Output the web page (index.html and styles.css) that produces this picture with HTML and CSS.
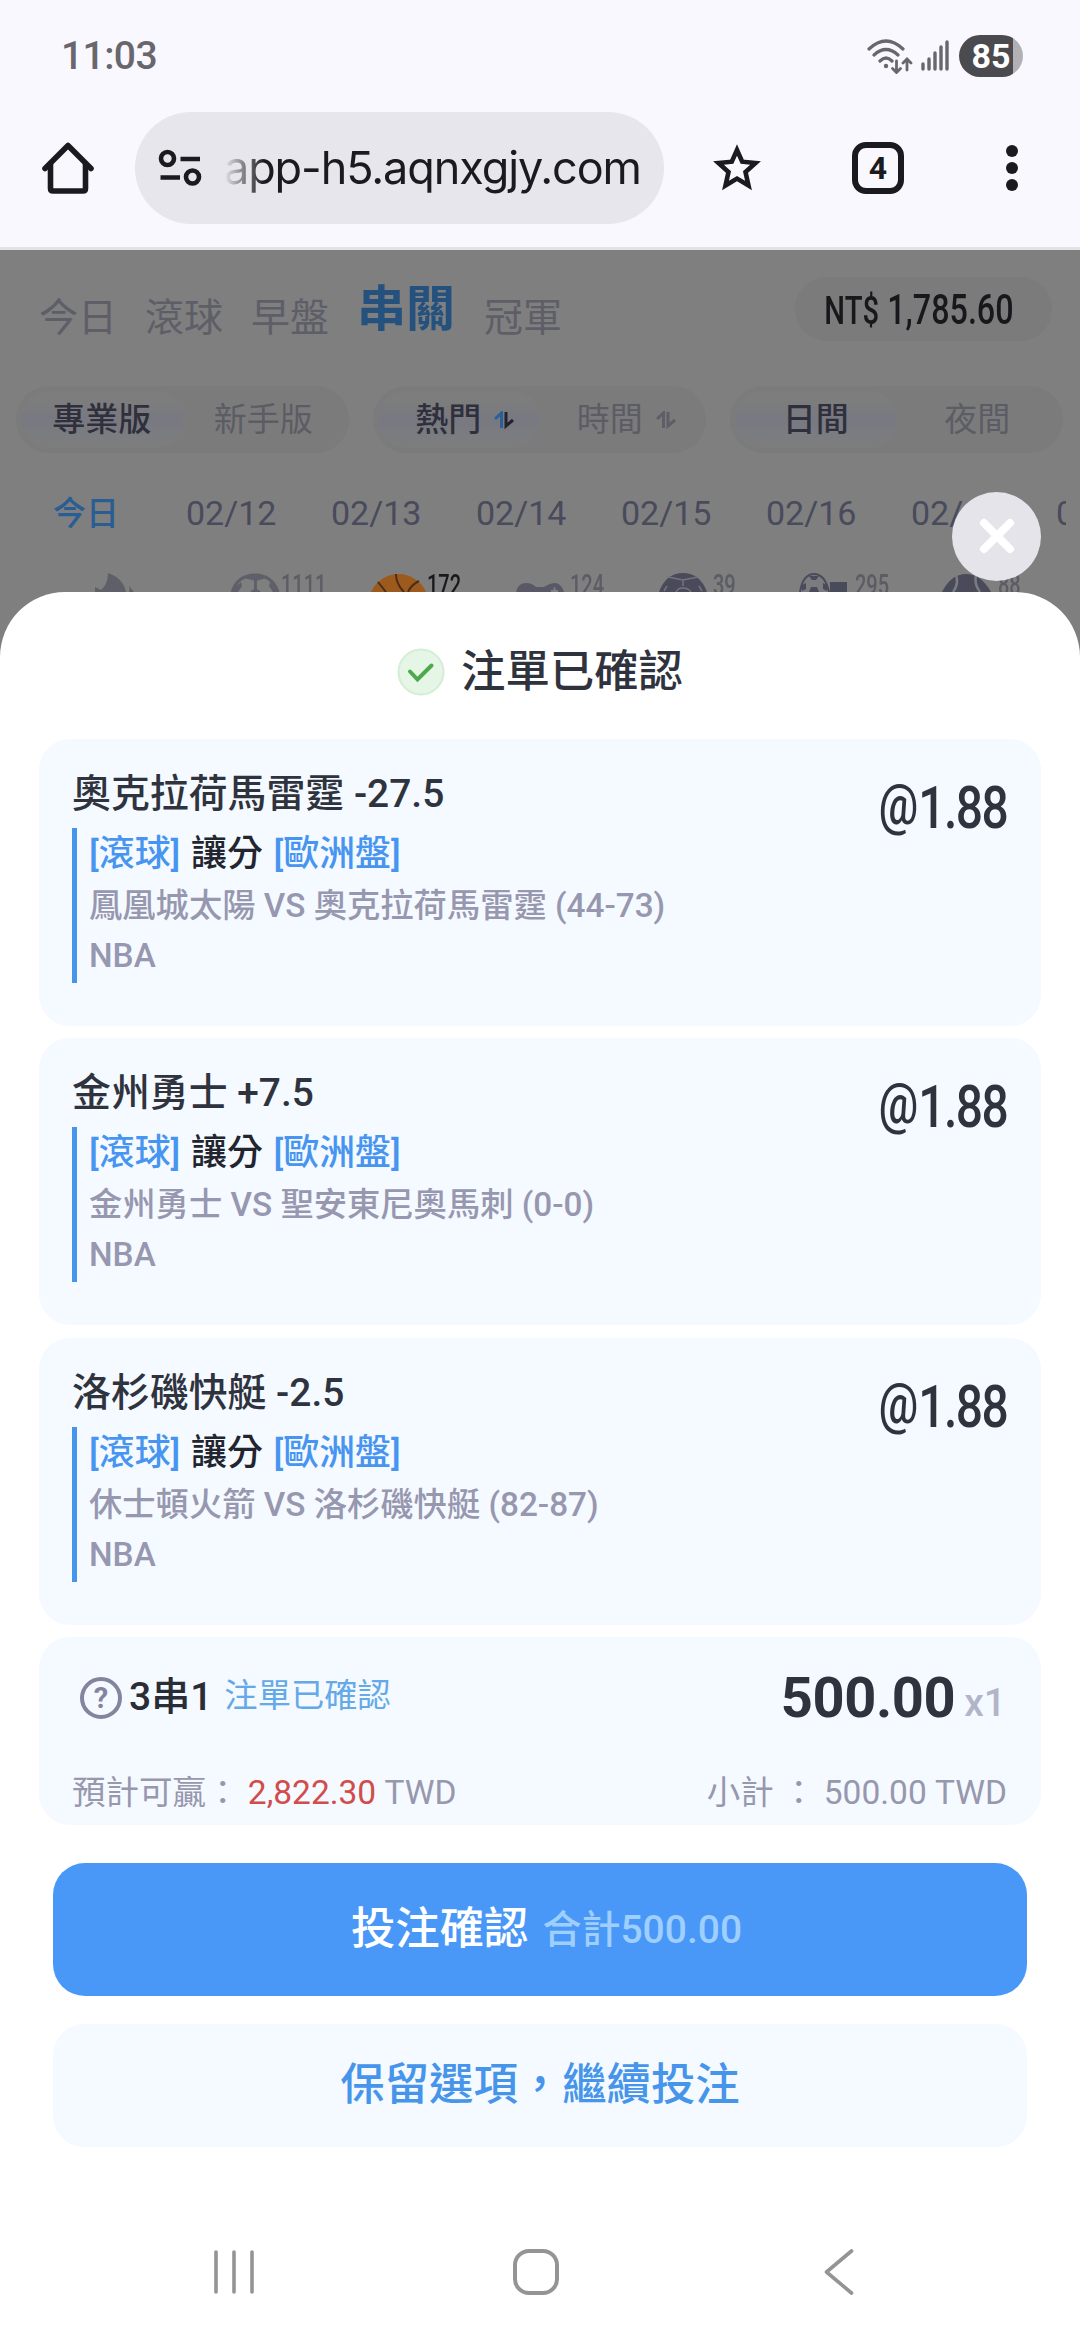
FILE: index.html
```html
<!DOCTYPE html>
<html lang="zh-Hant">
<head>
<meta charset="utf-8">
<title>注單已確認</title>
<link rel="stylesheet" href="styles.css">
</head>
<body>
<div class="screen">
  <header class="browser">
    <div class="status">
      <span class="clock">11:03</span>
      <div class="status-icons">
        <svg class="wifi" width="46" height="36" viewBox="0 0 46 36" fill="none" stroke="#68676d" stroke-width="3.2" stroke-linecap="round"><path d="M2 11Q19 -5 36 11M7 17Q19 6 31 17M13 23Q19 17 25 23"/><circle cx="19" cy="28" r="2.2" fill="#68676d" stroke="none"/><path d="M29.500 23v11M25.500 30.500l4 4l4-4M40 32V21.500M36 25l4-4l4 4" stroke-width="2.800"/></svg>
        <svg class="signal" width="28" height="32" viewBox="0 0 28 32" stroke="#68676d" stroke-width="3.4" stroke-linecap="round"><path d="M2 29v-5M8 29V19M14 29V13M20 29V7M26 29V2"/></svg>
        <span class="battery">85</span>
      </div>
    </div>
    <div class="toolbar">
      <svg class="home" width="54" height="54" viewBox="0 0 54 54" fill="none" stroke="#1b1b1f" stroke-width="5.600" stroke-linejoin="round" stroke-linecap="round"><path d="M4 27.500L27 4.500L50 27.500"/><path d="M9.500 23V47.500Q9.500 50 12 50H42Q44.500 50 44.500 47.500V23"/></svg>
      <div class="address">
        <svg class="tune" width="44" height="38" viewBox="0 0 44 38" fill="none" stroke="#1b1b1f" stroke-width="4.600"><circle cx="9.500" cy="9.500" r="6.500"/><path d="M22.500 10H42M2.500 28.500H22"/><circle cx="34.500" cy="28" r="6.500"/></svg>
        <span class="url">app-h5.aqnxgjy.com</span>
      </div>
      <svg class="star" width="50" height="50" viewBox="0 0 50 50" fill="none" stroke="#1b1b1f" stroke-width="4.600"><path d="M25 7L30.200 18.700L43.500 20L33.500 29L36.500 42.500L25 35.600L13.500 42.500L16.500 29L6.500 20L19.800 18.700Z"/></svg>
      <div class="tab-count">4</div>
      <svg class="dots" width="14" height="50" viewBox="0 0 14 50" fill="#1b1b1f"><circle cx="7" cy="8" r="6"/><circle cx="7" cy="25" r="6"/><circle cx="7" cy="42" r="6"/></svg>
    </div>
  </header>

  <section class="site">
    <div class="top-row">
      <nav class="tabs"><span>今日</span><span>滾球</span><span>早盤</span><span class="current">串關</span><span>冠軍</span></nav>
      <div class="balance"><span class="narrow"><small>NT$</small> 1,785.60</span></div>
    </div>
    <div class="segments">
      <div class="segment"><span class="on">專業版</span><span>新手版</span></div>
      <div class="segment sorts"><span class="on">熱門<svg class="sort" width="20" height="18" viewBox="0 0 20 18" fill="none" stroke-width="3"><path d="M1 8L7.500 2V17" stroke="#2a5f98"/><path d="M12 1V15L19 9" stroke="#22232e"/></svg></span><span>時間<svg class="sort" width="20" height="18" viewBox="0 0 20 18" fill="none" stroke="#5e5e68" stroke-width="3"><path d="M1 8L7.500 2V17M12 1V15L19 9"/></svg></span></div>
      <div class="segment"><span class="on">日間</span><span>夜間</span></div>
    </div>
    <div class="dates"><span class="today">今日</span><span>02/12</span><span>02/13</span><span>02/14</span><span>02/15</span><span>02/16</span><span>02/17</span><span>02/18</span></div>
    <div class="sports">
      <div class="sport"><svg width="60" height="20" viewBox="0 0 60 20" fill="#5f5f6a"><path d="M14 20V15L20 18Q27 12 27 1Q42 6 45 20ZM48 20Q49 16 48 14L53 20Z"/></svg></div>
      <div class="sport"><svg width="60" height="20" viewBox="0 0 60 20"><path d="M8 20Q14 3 31 3T54 20" fill="none" stroke="#5f5f6a" stroke-width="3"/><path d="M20 6Q31 0 42 6L32 9ZM30 8h3v9l4 3H26l4-3ZM10 16L17 10L18 14L14 20H8ZM53 16L46 10L45 14L49 20H55Z" fill="#5f5f6a"/></svg><span>1111</span></div>
      <div class="sport active"><svg width="60" height="20" viewBox="0 0 60 20"><path d="M1 20A30 30 0 0 1 56 20Z" fill="#9c5b1c"/><path d="M26 2Q26 12 34 20M8 10L16 20M49 9Q41 13 38 20" fill="none" stroke="#4a2d17" stroke-width="2"/></svg><span>172</span></div>
      <div class="sport"><svg width="60" height="20" viewBox="0 0 60 20" fill="#585866"><path d="M3 20Q5 11 13 11Q19 11 23 15H31Q37 11 43 11Q49 13 51 20Z"/><path d="M38 19h7M41.500 15.500v5" stroke="#7f7f7f" stroke-width="2"/></svg><span>124</span></div>
      <div class="sport"><svg width="60" height="20" viewBox="0 0 60 20"><path d="M3 20Q10 1 27 1T51 20Z" fill="#4a4b5a"/><path d="M12 5L27 8L42 5M27 8V14M8 19L11 14M46 19L43 14M20 20Q22 16 27 16T35 20" fill="none" stroke="#74747c" stroke-width="1.500"/></svg><span>39</span></div>
      <div class="sport"><svg width="60" height="20" viewBox="0 0 60 20"><path d="M2 20Q5 2 16 2T31 20" fill="#7b7b80" stroke="#4a4b5a" stroke-width="2"/><path d="M11 4H21L18 8H14ZM11 20L13 15H19L21 20ZM4 13L8 11V17L4 19ZM29 13L25 11V17L29 19ZM32 10H49V20H32Z" fill="#4a4b5a"/></svg><span>295</span></div>
      <div class="sport"><svg width="60" height="20" viewBox="0 0 60 20"><path d="M1 20Q10 2 25 2T50 20Z" fill="#4a4b5a"/><path d="M15 3Q18 12 12 20M35 3Q33 12 39 20" fill="none" stroke="#7b7b80" stroke-width="2.500"/></svg><span>88</span></div>
    </div>
  </section>

  <main class="sheet">
    <button class="close" aria-label="關閉"><svg width="36" height="36" viewBox="0 0 36 36" stroke="#fff" stroke-width="8" stroke-linecap="round"><path d="M5 5L31 31M31 5L5 31"/></svg></button>
    <h1 class="sheet-title"><svg width="48" height="48" viewBox="0 0 48 48" fill="none"><circle cx="24" cy="24" r="22.500" fill="#e5f6e7" stroke="#d3edd6" stroke-width="2"/><path d="M13 23.500L20.500 31.500L34.500 17.500" stroke="#4ea94b" stroke-width="4" stroke-linecap="round"/></svg>注單已確認</h1>

    <div class="bets">
      <article class="bet">
        <div class="bet-info">
          <h2>奧克拉荷馬雷霆 -27.5</h2>
          <div class="detail"><p class="market"><b>[滾球]</b> 讓分 <b>[歐洲盤]</b></p><p>鳳凰城太陽 VS 奧克拉荷馬雷霆 (44-73)</p><p>NBA</p></div>
        </div>
        <div class="odds"><u>@</u><i>1.88</i></div>
      </article>
      <article class="bet">
        <div class="bet-info">
          <h2>金州勇士 +7.5</h2>
          <div class="detail"><p class="market"><b>[滾球]</b> 讓分 <b>[歐洲盤]</b></p><p>金州勇士 VS 聖安東尼奧馬刺 (0-0)</p><p>NBA</p></div>
        </div>
        <div class="odds"><u>@</u><i>1.88</i></div>
      </article>
      <article class="bet">
        <div class="bet-info">
          <h2>洛杉磯快艇 -2.5</h2>
          <div class="detail"><p class="market"><b>[滾球]</b> 讓分 <b>[歐洲盤]</b></p><p>休士頓火箭 VS 洛杉磯快艇 (82-87)</p><p>NBA</p></div>
        </div>
        <div class="odds"><u>@</u><i>1.88</i></div>
      </article>
      <article class="summary">
        <div class="stake">
          <span class="help">?</span><strong class="combo">3串1</strong><span class="state">注單已確認</span>
          <strong class="amount">500.00</strong><span class="times">x1</span>
        </div>
        <div class="totals"><span>預計可贏： <em>2,822.30</em> TWD</span><span class="subtotal">小計 ： 500.00 TWD</span></div>
      </article>
    </div>

    <div class="actions">
      <button class="confirm">投注確認<span>合計500.00</span></button>
      <button class="keep">保留選項，繼續投注</button>
    </div>

    <nav class="system">
      <svg width="42" height="48" viewBox="0 0 42 48" stroke="#949494" stroke-width="3.600" stroke-linecap="round"><path d="M3 4V44M21 4V44M39 4V44"/></svg>
      <svg width="48" height="48" viewBox="0 0 48 48" fill="none" stroke="#949494" stroke-width="4"><rect x="3" y="3" width="42" height="42" rx="14"/></svg>
      <svg width="30" height="48" viewBox="0 0 30 48" fill="none" stroke="#949494" stroke-width="3.600" stroke-linecap="round" stroke-linejoin="round"><path d="M27.500 3L2.500 24L27.500 45"/></svg>
    </nav>
  </main>
</div>
</body>
</html>
```

FILE: styles.css
```css
* { box-sizing: border-box; margin: 0; padding: 0; }
body { width: 1080px; height: 2340px; overflow: hidden; font-family: Roboto, "Noto Sans CJK TC", sans-serif; }
svg { display: block; flex: none; }
button { border: 0; font: inherit; }
.screen { width: 1080px; height: 2340px; display: flex; flex-direction: column; background: #7f7f7f; }

.browser { height: 250px; background: #faf8ff; border-bottom: 3px solid #e2e1e6; }
.status { height: 112px; padding: 0 57px 0 61px; display: flex; align-items: center; justify-content: space-between; }
.clock { font-size: 39px; font-weight: 500; letter-spacing: -.6px; color: #68676d; }
.status-icons { display: flex; align-items: center; gap: 10px; }
.wifi { margin-right: -2px; }
.battery { width: 64px; height: 42px; border-radius: 21px; background: linear-gradient(90deg, #4b4a4e 84%, #b1b0b5 84%); color: #fff; font-size: 34px; line-height: 43px; font-weight: 700; text-align: center; }
.toolbar { height: 112px; display: flex; align-items: center; }
.home { margin-left: 41px; }
.address { width: 529px; height: 112px; margin-left: 40px; padding-left: 23px; border-radius: 56px; background: #e7e6ec; display: flex; align-items: center; }
.url { margin-left: 22px; font-family: Inter, sans-serif; font-size: 45px; line-height: 60px; letter-spacing: -1.1px; white-space: nowrap; color: #1b1b1f; background: linear-gradient(90deg, rgba(27,27,31,0), #1b1b1f 40px); background-clip: text; -webkit-background-clip: text; -webkit-text-fill-color: transparent; }
.star { margin-left: 48px; }
.tab-count { width: 52px; height: 52px; margin-left: 90px; border: 6px solid #1b1b1f; border-radius: 14px; text-align: center; font-size: 32px; font-weight: 700; line-height: 41px; color: #1b1b1f; }
.dots { margin-left: 101px; }

.site { height: 342px; overflow: hidden; }
.top-row { height: 136px; padding: 27px 28px 0 39px; display: flex; justify-content: space-between; }
.tabs { display: flex; gap: 28px; align-items: baseline; font-size: 39px; line-height: 76px; color: #5e5e68; }
.tabs .current { font-size: 49px; font-weight: 700; color: #25517f; position: relative; top: -5px; margin-right: 1px; }
.balance { width: 257px; height: 64px; border-radius: 32px; background: #7b7b7b; display: flex; justify-content: center; align-items: center; white-space: nowrap; color: #18181c; }
.narrow { font-size: 42px; font-weight: 500; transform: scaleX(.77); margin-right: 9px; }
.narrow small { font-size: 38px; }
.segments { padding: 0 17px 0 16px; height: 68px; display: flex; justify-content: space-between; }
.segment { width: 333px; height: 67px; padding: 5px; border-radius: 34px; background: #7b7b7b; display: flex; font-size: 33px; line-height: 56px; color: #5c5c65; }
.segment span { flex: 1; display: flex; justify-content: center; align-items: center; }
.segment .on { border-radius: 28px; background: linear-gradient(#7d7d7d 15%, #787981 50%, #7b7c80 75%, #7d7d7d); color: #30303d; font-weight: 500; }
.sorts span { padding-left: 12px; }
.sort { margin-left: 13px; }
.dates { height: 118px; width: 1066px; overflow: hidden; padding-left: 53px; display: flex; font-size: 34px; line-height: 119px; color: #494a5c; white-space: nowrap; }
.dates span { flex: none; width: 145px; }
.dates .today { width: 133px; font-size: 33px; font-weight: 500; color: #2a5d93; }
.sports { padding-left: 81px; height: 20px; display: flex; }
.sport { flex: none; width: 142.700px; height: 20px; display: flex; color: #5c5c65; }
.sport.active { margin-left: 4px; }
.sport span { font-size: 29px; line-height: 27px; font-weight: 500; transform: scaleX(.69); transform-origin: 0 0; margin-left: -3px; }
.sport.active span { color: #19191d; }

.sheet { position: relative; height: 1748px; border-radius: 65px 65px 0 0; background: #fff; }
.close { position: absolute; left: 952px; top: -100px; width: 89px; height: 89px; border-radius: 50%; background: #e4e4ea; display: flex; align-items: center; justify-content: center; }
.close svg { margin-top: -2px; }
.sheet-title { height: 147px; padding-top: 13px; display: flex; align-items: center; justify-content: center; gap: 16px; font-size: 44.400px; line-height: 60px; font-weight: 500; color: #2f333e; }
.bets { width: 1002px; margin-left: 39px; display: flex; flex-direction: column; gap: 12.300px; }
.bet, .summary { border-radius: 31px; background: #f4faff; }
.bet { height: 287px; padding: 30px 35px 0 33px; display: flex; justify-content: space-between; color: #2f333e; }
.bet h2 { font-size: 38.900px; font-weight: 500; line-height: 50px; height: 59px; }
.detail { height: 155px; padding: 0 0 0 12px; border-left: 5px solid #4795ea; color: #9797b0; font-size: 33.300px; line-height: 50px; }
.detail p { white-space: nowrap; font-weight: 500; }
.detail .market { height: 53px; line-height: 53px; font-size: 35.900px; word-spacing: 1.800px; color: #22252e; }
.detail b { font-weight: 500; color: #4795f0; }
.odds { font-size: 55px; line-height: 78px; font-weight: 500; transform: scaleX(.8); transform-origin: 100% 0; }
.odds u { text-decoration: none; position: relative; top: -4px; }
.odds i { font-style: normal; font-size: 60px; letter-spacing: -2px; margin-right: -1px; }

.summary { height: 188px; padding: 0 35px 0 33px; }
.stake { height: 124px; line-height: 60px; display: flex; align-items: center; }
.help { width: 42px; height: 42px; margin: -2px 0 0 8px; border: 4px solid #84849e; border-radius: 50%; color: #84849e; font-size: 29px; font-weight: 700; line-height: 35px; text-align: center; }
.combo { margin: -4px 0 0 7px; font-size: 39px; font-weight: 500; color: #2a2c36; }
.state { margin: -5px 0 0 12px; font-size: 33.300px; color: #65a9e8; }
.amount { margin: -2px 0 0 auto; font-size: 56px; letter-spacing: -.4px; font-weight: 700; color: #2f333e; }
.times { margin: 9px 0 0 9px; font-size: 39px; font-weight: 500; color: #b3b4c9; }
.totals { display: flex; justify-content: space-between; font-size: 33.500px; line-height: 63px; color: #9797ae; white-space: pre; }
.totals em { font-style: normal; color: #d24c4c; }
.subtotal { margin-right: -1px; }

.actions { padding: 38px 53px 0; display: flex; flex-direction: column; gap: 28px; }
.confirm { height: 133px; padding-left: 13px; border-radius: 32px; background: #4998f8; color: #fff; font-size: 44.400px; line-height: 60px; font-weight: 500; display: flex; align-items: center; justify-content: center; gap: 14px; }
.confirm span { font-size: 39px; font-weight: 500; color: #9fcfff; padding-top: 2px; }
.keep { height: 123px; border-radius: 31px; background: #f4faff; color: #4795ea; font-size: 44.400px; line-height: 60px; font-weight: 500; }
.system { margin-top: 101px; padding: 0 226px 0 213px; display: grid; grid-template-columns: 299px 1fr auto; }
```
